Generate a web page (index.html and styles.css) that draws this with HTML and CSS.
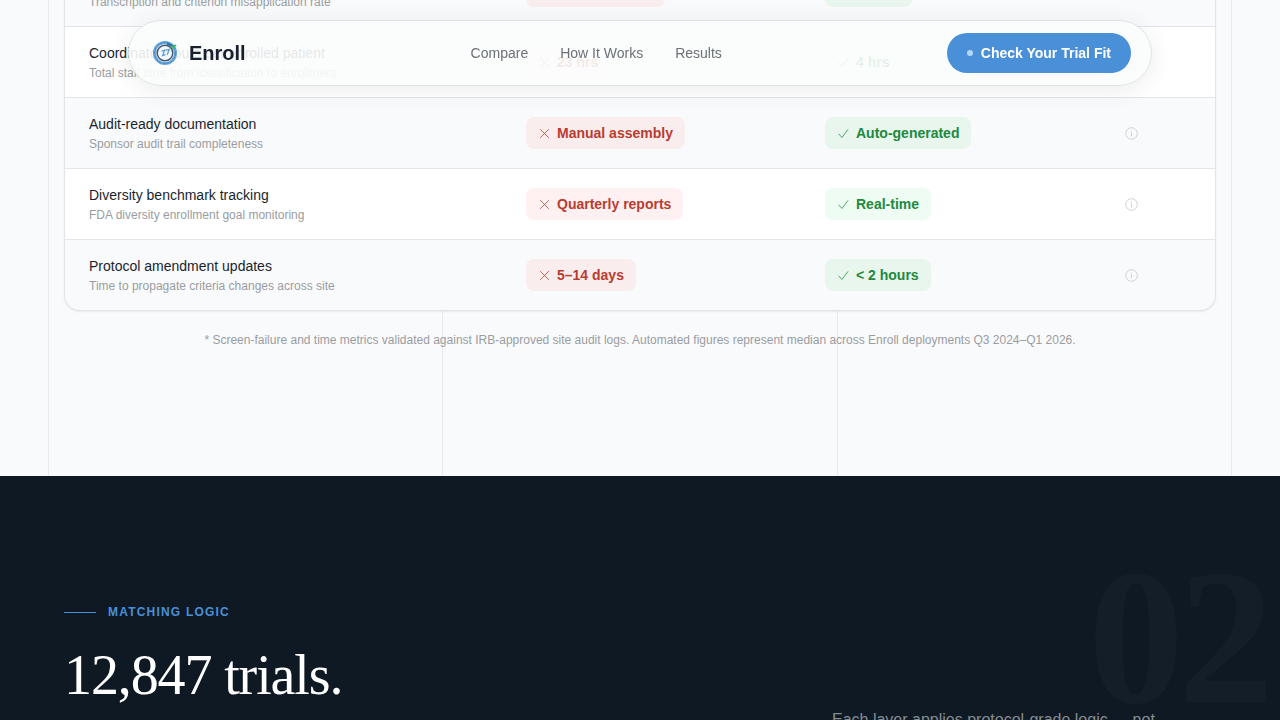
FILE: index.html
```
<!DOCTYPE html>
<html lang="en">
<head>
<meta charset="utf-8">
<title>Enroll</title>
<meta name="viewport" content="width=device-width, initial-scale=1">
<link rel="stylesheet" href="styles.css">
</head>
<body>
<svg class="sprite" aria-hidden="true">
  <symbol id="cross" viewBox="0 0 12 12"><path d="M2 2l8 8M10 2l-8 8" fill="none" stroke="currentColor" stroke-width=".7"/></symbol>
  <symbol id="check" viewBox="0 0 12 12"><path d="M1.5 6.3L4.6 9.7L10.2 2.2" fill="none" stroke="currentColor" stroke-width=".7"/></symbol>
  <symbol id="info" viewBox="0 0 14 14"><circle cx="7.5" cy="7.5" r="5.8" fill="none" stroke="currentColor" stroke-width=".8"/><path d="M6.7 6.8h.8v3.7M7.5 4.5v1" fill="none" stroke="currentColor" stroke-width=".8"/></symbol>
</svg>

<header class="nav">
  <a class="brand" href="#">
    <svg class="logo" viewBox="0 0 28 28" aria-hidden="true">
      <circle cx="14" cy="14" r="10.6" fill="none" stroke="#6ba8dc" stroke-width="3"/>
      <circle cx="14" cy="14" r="10.6" fill="none" stroke="#3f87c9" stroke-width="1" stroke-dasharray="3 1"/>
      <circle cx="14" cy="14" r="7.8" fill="#f3f8fc" stroke="#44576b" stroke-width="1.5"/>
      <path d="M10.4 12.2l3.2-1-2 5.4 3-1M14.6 11.4l3.6-1-2 5.4" fill="none" stroke="#5a9bd6" stroke-width="1.2"/>
      <path d="M16 4.5l6 3" stroke="#2c70aa" stroke-width="2"/>
      <path d="M20.4 7.2l1.6 1.8 2.8-3.2" fill="none" stroke="#3fb56b" stroke-width="2"/>
    </svg>
    <span>Enroll</span>
  </a>
  <nav class="links">
    <a href="#compare">Compare</a>
    <a href="#how">How It Works</a>
    <a href="#results">Results</a>
  </nav>
  <button class="cta" type="button"><span class="dot"></span>Check Your Trial Fit</button>
</header>

<main>
<section class="compare" id="compare">
  <div class="rules" aria-hidden="true"><i></i><i></i><i></i></div>
  <div class="card">
    <table>
      <colgroup><col class="c-metric"><col class="c-value"><col class="c-value"><col class="c-info"></colgroup>
      <tbody>
        <tr>
          <th scope="row">Data entry errors<small>Transcription and criterion misapplication rate</small></th>
          <td><span class="pill bad"><svg><use href="#cross"/></svg>12–18% errors</span></td>
          <td><span class="pill good"><svg><use href="#check"/></svg>&lt; 0.5%</span></td>
          <td><button class="info" type="button" aria-label="More about data entry errors"><svg><use href="#info"/></svg></button></td>
        </tr>
        <tr>
          <th scope="row">Coordinator hours per enrolled patient<small>Total staff time from identification to enrollment</small></th>
          <td><span class="pill bad"><svg><use href="#cross"/></svg>23 hrs</span></td>
          <td><span class="pill good"><svg><use href="#check"/></svg>4 hrs</span></td>
          <td><button class="info" type="button" aria-label="More about coordinator hours"><svg><use href="#info"/></svg></button></td>
        </tr>
        <tr>
          <th scope="row">Audit-ready documentation<small>Sponsor audit trail completeness</small></th>
          <td><span class="pill bad"><svg><use href="#cross"/></svg>Manual assembly</span></td>
          <td><span class="pill good"><svg><use href="#check"/></svg>Auto-generated</span></td>
          <td><button class="info" type="button" aria-label="More about documentation"><svg><use href="#info"/></svg></button></td>
        </tr>
        <tr>
          <th scope="row">Diversity benchmark tracking<small>FDA diversity enrollment goal monitoring</small></th>
          <td><span class="pill bad"><svg><use href="#cross"/></svg>Quarterly reports</span></td>
          <td><span class="pill good"><svg><use href="#check"/></svg>Real-time</span></td>
          <td><button class="info" type="button" aria-label="More about diversity tracking"><svg><use href="#info"/></svg></button></td>
        </tr>
        <tr>
          <th scope="row">Protocol amendment updates<small>Time to propagate criteria changes across site</small></th>
          <td><span class="pill bad"><svg><use href="#cross"/></svg>5–14 days</span></td>
          <td><span class="pill good"><svg><use href="#check"/></svg>&lt; 2 hours</span></td>
          <td><button class="info" type="button" aria-label="More about amendment updates"><svg><use href="#info"/></svg></button></td>
        </tr>
      </tbody>
    </table>
  </div>
  <p class="note">* Screen-failure and time metrics validated against IRB-approved site audit logs. Automated figures represent median across Enroll deployments Q3 2024–Q1 2026.</p>
</section>

<section class="logic" id="how">
  <span class="numeral" aria-hidden="true">02</span>
  <p class="eyebrow">MATCHING LOGIC</p>
  <div class="intro">
    <h2>12,847 trials.</h2>
    <p class="lead">Each layer applies protocol-grade logic — not</p>
  </div>
</section>
</main>
</body>
</html>
```

FILE: styles.css
```
* { box-sizing: border-box; }

body {
  margin: 0;
  height: 100vh;
  overflow: hidden;
  background: #f9fafc;
  color: #1a1f2e;
  font-family: "Liberation Sans", Arial, sans-serif;
}

.sprite { display: none; }
a { color: inherit; text-decoration: none; }
button { font: inherit; border: 0; cursor: pointer; }

/* Floating navigation */
.nav {
  position: fixed;
  z-index: 10;
  top: 20px;
  left: 10%;
  right: 10%;
  display: flex;
  align-items: center;
  justify-content: space-between;
  padding: 12px 20px 12px 22px;
  border: 1px solid #dfe2e4;
  border-radius: 33px;
  background: rgba(251, 253, 252, .9);
  box-shadow: 0 4px 24px rgba(15, 25, 20, .08);
}

.brand {
  display: flex;
  align-items: center;
  gap: 10px;
  font-size: 20px;
  font-weight: 700;
}

.logo { width: 28px; height: 28px; }

.links {
  display: flex;
  gap: 32px;
  font-size: 14px;
  color: #6b7177;
}

.cta {
  display: flex;
  align-items: center;
  gap: 8px;
  height: 40px;
  padding: 0 20px;
  border-radius: 20px;
  background: #4a90d9;
  color: #fff;
  font-size: 14px;
  font-weight: 700;
}

.dot {
  width: 6px;
  height: 6px;
  border-radius: 50%;
  background: #b5d7f8;
}

/* Comparison table */
.compare {
  position: relative;
  margin-top: -44px;
  padding: 0 64px 127px;
}

.rules {
  position: absolute;
  inset: 0 48px;
  display: grid;
  grid-template-columns: repeat(3, 1fr);
  border-right: 1px solid #e8eaed;
}

.rules i { border-left: 1px solid #e8eaed; }

.card {
  position: relative;
  overflow: hidden;
  border: 1px solid #e1e4e8;
  border-top: 0;
  border-radius: 0 0 16px 16px;
  background: #fff;
  box-shadow: 0 1px 2px rgba(0, 0, 0, .07);
}

table {
  width: 100%;
  table-layout: fixed;
  border-collapse: separate;
  border-spacing: 0;
}

.c-metric { width: 38%; }
.c-value { width: 26%; }
.c-info { width: 10%; }

tr:nth-child(odd) { background: #f9fafc; }

th, td {
  height: 71px;
  padding: 0 24px;
  border-bottom: 1px solid #e2e5e9;
  text-align: left;
  vertical-align: middle;
}

tr:last-child > * { height: 70px; border-bottom: 0; }

th {
  padding-top: 2px;
  font-size: 14px;
  line-height: 20px;
  font-weight: 400;
}

small {
  display: block;
  font-size: 12px;
  line-height: 20px;
  color: #999da1;
}

.pill {
  display: inline-flex;
  align-items: center;
  gap: 6px;
  height: 32px;
  padding: 0 12px;
  border-radius: 8px;
  font-size: 14px;
  font-weight: 700;
  vertical-align: middle;
}

.pill svg { width: 13px; height: 13px; }
.bad { background: #fff1f1; color: #b93c30; }
.good { background: #eefcf3; color: #20893e; }
tr:nth-child(odd) .bad { background: #f9edee; }
tr:nth-child(odd) .good { background: #e8f6ee; }

.info {
  display: block;
  padding: 0;
  background: none;
  color: #c4c7ca;
}

.info svg { display: block; width: 14px; height: 14px; }

.note {
  position: relative;
  margin: 20px 0 0;
  font-size: 12px;
  line-height: 18px;
  text-align: center;
  color: #999da1;
}

/* Matching logic */
.logic {
  position: relative;
  overflow: hidden;
  padding: 128px 64px;
  background: #0f1923;
  color: #fff;
}

.numeral {
  position: absolute;
  top: 66px;
  right: 12px;
  font-family: "Liberation Serif", "Times New Roman", serif;
  font-size: 192px;
  line-height: 192px;
  font-weight: 700;
  letter-spacing: -6px;
  color: #141e28;
}

.eyebrow {
  position: relative;
  display: flex;
  align-items: center;
  gap: 12px;
  margin: 0 0 24px;
  font-size: 12px;
  line-height: 16px;
  font-weight: 700;
  letter-spacing: 0.1em;
  color: #4a90d9;
}

.eyebrow::before {
  content: "";
  width: 32px;
  height: 1px;
  background: #4a90d9;
}

.intro {
  position: relative;
  display: grid;
  grid-template-columns: 2fr 1fr;
}

h2 {
  margin: 0;
  font-family: "Liberation Serif", "Times New Roman", serif;
  font-size: 56px;
  line-height: 62px;
  font-weight: 400;
  letter-spacing: -0.02em;
}

.lead {
  margin: 0;
  padding-top: 63px;
  font-size: 16px;
  line-height: 26px;
  color: #868c92;
}
```
